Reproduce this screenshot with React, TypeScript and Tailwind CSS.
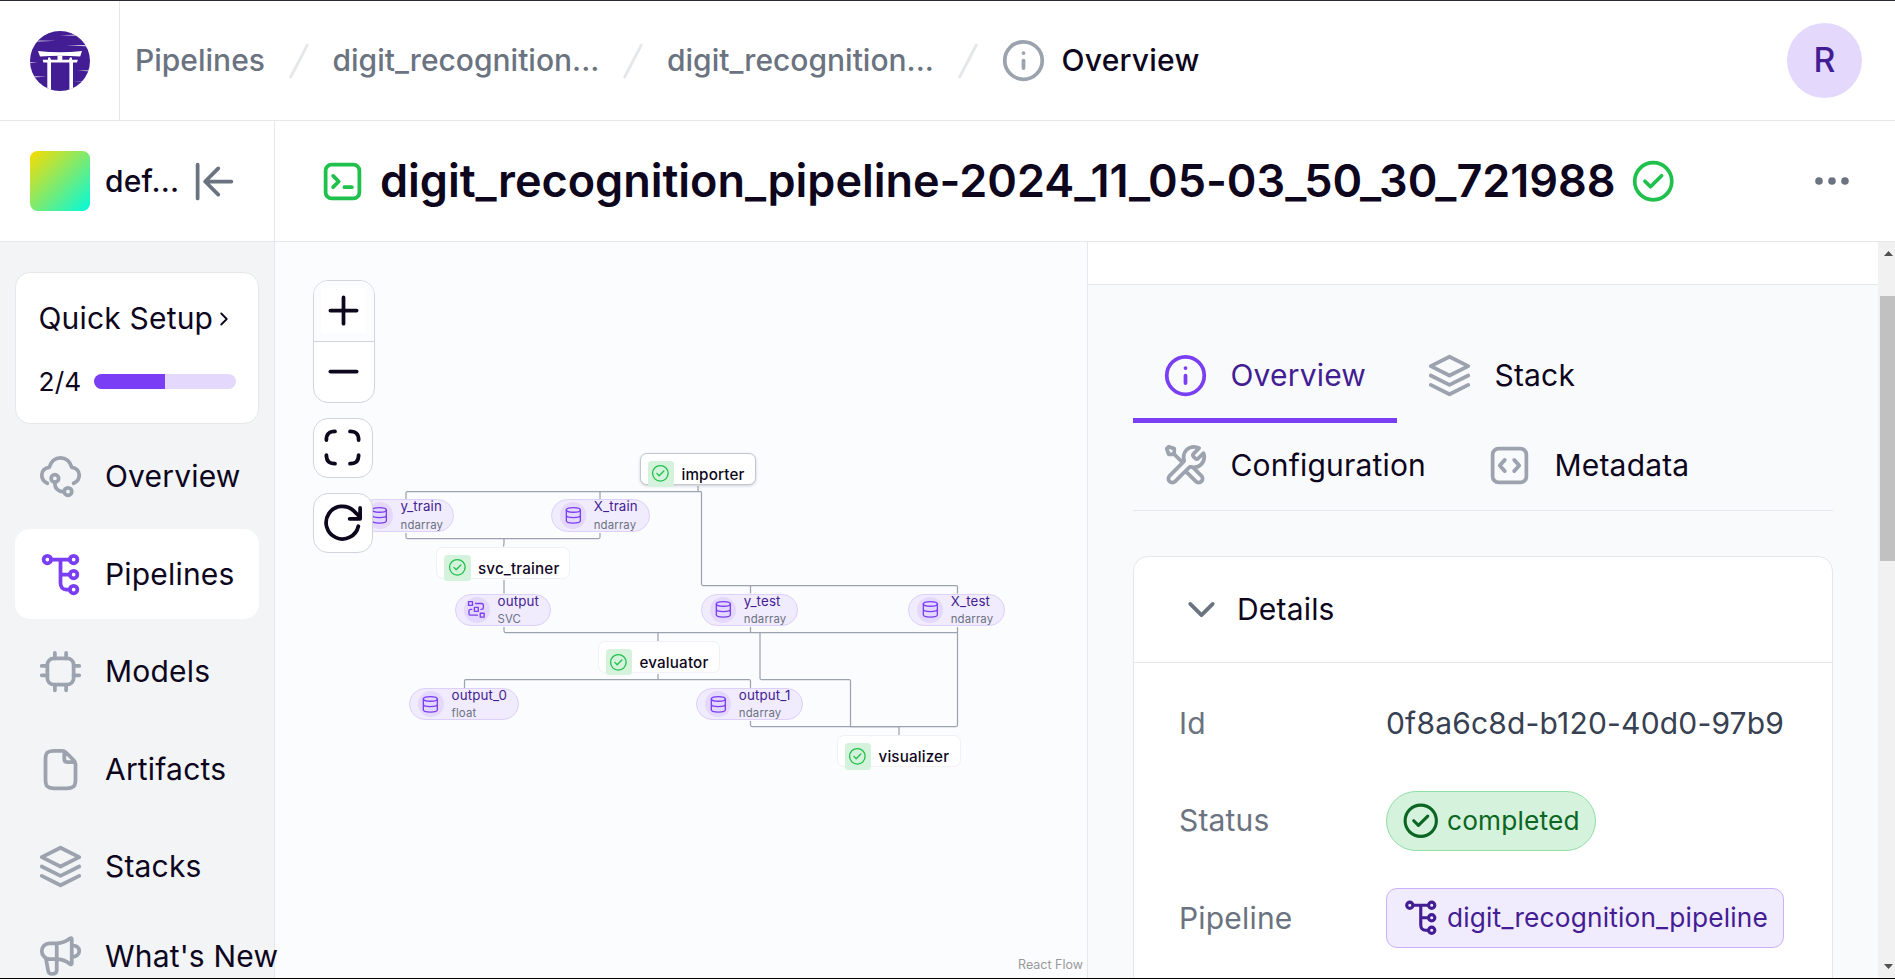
import React from "react";

type IconProps = { className?: string; width?: number };

function Svg({ className = "", width = 2, children }: IconProps & { children: React.ReactNode }) {
  return (
    <svg
      viewBox="0 0 24 24"
      fill="none"
      stroke="currentColor"
      strokeWidth={width}
      strokeLinecap="round"
      strokeLinejoin="round"
      className={`shrink-0 ${className}`}
    >
      {children}
    </svg>
  );
}

const InfoIcon = (p: IconProps) => (
  <Svg {...p}>
    <circle cx="12" cy="12" r="10" />
    <path d="M12 16V12M12 8H12.01" />
  </Svg>
);
const CheckIcon = (p: IconProps) => (
  <Svg {...p}>
    <circle cx="12" cy="12" r="10" />
    <path d="M7.5 12L10.5 15L16.5 9" />
  </Svg>
);
const PipelineIcon = (p: IconProps) => (
  <Svg {...p}>
    <circle cx="5" cy="4" r="2" />
    <circle cx="19" cy="4" r="2" />
    <circle cx="19" cy="12" r="2" />
    <circle cx="19" cy="20" r="2" />
    <path d="M7 4H17M12 4V16.5C12 18.6 13.2 20 15 20H17M12 12H17" />
  </Svg>
);
const CloudIcon = (p: IconProps) => (
  <Svg {...p}>
    <path d="M5 15.6C3.2 14.8 2 13.1 2 11.2C2 9.1 3.7 7.3 6 7.1C6.8 4.1 9.1 2 12 2S17.2 4.1 18 7.1C20.3 7.3 22 9.1 22 11.2C22 13.1 20.8 14.8 19 15.6" />
    <circle cx="9" cy="13" r="2" />
    <circle cx="16" cy="20" r="2" />
    <path d="M9 15V16C9 18.2 10.8 20 13 20H14" />
  </Svg>
);
const CpuIcon = (p: IconProps) => (
  <Svg {...p}>
    <rect x="5" y="5" width="14" height="14" rx="3.4" />
    <path d="M9 2V5M15 2V5M9 19V22M15 19V22M2 9H5M2 14H5M19 9H22M19 14H22" />
  </Svg>
);
const FileIcon = (p: IconProps) => (
  <Svg {...p}>
    <path d="M14 2.3V6.4C14 7.4 14.6 8 15.6 8H19.7M20 9V17.2C20 20.8 19.2 22 15.2 22H8.8C4.8 22 4 20.8 4 17.2V6.8C4 3.2 4.8 2 8.8 2H13C13.8 2 14.3 2.3 14.8 2.8L19.2 7.2C19.7 7.7 20 8.2 20 9Z" />
  </Svg>
);
const LayersIcon = (p: IconProps) => (
  <Svg {...p}>
    <path d="M12 2L22 7L12 12L2 7L12 2ZM2 12L12 17L22 12M2 17L12 22L22 17" />
  </Svg>
);
const MegaphoneIcon = (p: IconProps) => (
  <Svg {...p}>
    <path d="M10 5H6.2C3.8 5 2 6.8 2 9S3.8 13.4 6.2 13.4H10M10 5V13.4M10 5C12.8 5 15.8 3.4 17.2 2.3C17.6 2 18 2.2 18 2.7V15.7C18 16.2 17.6 16.4 17.2 16.1C15.8 15 12.8 13.4 10 13.4M18 6C20.4 6 22 7.2 22 9.1S20.4 12.3 18 12.3M4.2 13L5.4 19.6C5.6 20.6 6.1 21.2 7 21.2H8C9.2 21.2 10 20.4 10 19.2V13.4" />
  </Svg>
);
const CollapseIcon = (p: IconProps) => (
  <Svg {...p}>
    <path d="M3 21V3M21 12H7M7 12L14 19M7 12L14 5" />
  </Svg>
);
const TerminalIcon = (p: IconProps) => (
  <Svg {...p}>
    <rect x="3" y="3" width="18" height="18" rx="3.2" />
    <path d="M7 9L10 12L7 15M13 15H17" />
  </Svg>
);
const CodeIcon = (p: IconProps) => (
  <Svg {...p}>
    <rect x="3" y="3" width="18" height="18" rx="3.2" />
    <path d="M14.5 15L17.2 12L14.5 9M9.5 9L6.8 12L9.5 15" />
  </Svg>
);
const ToolsIcon = (p: IconProps) => (
  <Svg {...p}>
    <path d="M6 6L10.5 10.5M6 6H3L2 3L3 2L6 3V6ZM19.259 2.741L16.631 5.369C16.235 5.765 16.037 5.963 15.963 6.191C15.898 6.392 15.898 6.608 15.963 6.809C16.037 7.037 16.235 7.235 16.631 7.631L16.869 7.869C17.265 8.265 17.463 8.463 17.691 8.537C17.892 8.602 18.108 8.602 18.309 8.537C18.537 8.463 18.735 8.265 19.131 7.869L21.589 5.411C21.854 6.055 22 6.76 22 7.5C22 10.538 19.538 13 16.5 13C16.134 13 15.776 12.964 15.43 12.896C14.944 12.8 14.7 12.752 14.553 12.767C14.397 12.782 14.319 12.806 14.181 12.88C14.05 12.95 13.919 13.081 13.657 13.343L6.5 20.5C5.672 21.328 4.328 21.328 3.5 20.5C2.672 19.672 2.672 18.328 3.5 17.5L10.657 10.343C10.919 10.081 11.05 9.95 11.12 9.819C11.194 9.681 11.218 9.603 11.233 9.447C11.248 9.299 11.2 9.056 11.104 8.57C11.036 8.224 11 7.866 11 7.5C11 4.462 13.462 2 16.5 2C17.506 2 18.448 2.27 19.259 2.741ZM12 15L17.5 20.5C18.328 21.328 19.672 21.328 20.5 20.5C21.328 19.672 21.328 18.328 20.5 17.5L15.975 12.975C15.655 12.945 15.343 12.887 15.041 12.804C14.652 12.698 14.225 12.775 13.94 13.06L12 15Z" />
  </Svg>
);
const DatabaseIcon = (p: IconProps) => (
  <Svg {...p}>
    <ellipse cx="12" cy="5" rx="9" ry="3" />
    <path d="M3 5V19C3 20.7 7 22 12 22S21 20.7 21 19V5M3 12C3 13.7 7 15 12 15S21 13.7 21 12" />
  </Svg>
);
const DataflowIcon = (p: IconProps) => (
  <Svg {...p}>
    <rect x="2" y="2" width="5" height="5" />
    <rect x="9.5" y="9.5" width="5" height="5" />
    <rect x="17" y="17" width="5" height="5" />
    <path d="M11 4.5H18.5C20 4.5 21 5.3 21 6.5V10C21 11.3 20 12 18.5 12H17.8M6.2 12H5C3.7 12 2.5 12.8 2.5 14V17.5C2.5 18.8 3.7 19.5 5 19.5H13.5" />
  </Svg>
);

function Logo() {
  return (
    <svg viewBox="0 0 60 60" className="size-[60px]">
      <defs>
        <clipPath id="disc">
          <circle cx="30" cy="30" r="30" />
        </clipPath>
      </defs>
      <g clipPath="url(#disc)">
        <rect width="60" height="60" fill="#431d93" />
        <g fill="#fff">
          <path d="M8 20Q30 22.6 52 20L50.2 25.4Q30 24 10 25.4Z" />
          <path d="M12.7 28.7H18V26.7L20 26.2L21 28.7H27.5V24.5H32.3V28.7H39L40 26.2L42 26.7V28.7H47.8L47 31.6H13.4Z" />
          <path d="M17.3 31H21V60H17.3ZM39.4 31H43V60H39.4Z" />
          <path d="M36 14.2L60 14.2V15.6Z" />
          <path d="M0 31.2L7.6 31.7L0 32.1Z" />
          <path d="M0 45.2L16.5 45.8L0 46.4Z" />
          <path opacity=".6" d="M4 9.2L26 9.8L4 10.9Z" />
          <path opacity=".55" d="M30 4.4L52 3L52 5.2Z" />
          <path opacity=".6" d="M47.5 39.6L60 39V40.4Z" />
          <path opacity=".5" d="M43 50.4L58 49.8V51Z" />
        </g>
      </g>
    </svg>
  );
}

const Slash = () => (
  <svg viewBox="0 0 20 36" className="h-9 w-5 shrink-0" fill="none" stroke="#e5e7eb" strokeWidth="2.8" strokeLinecap="round">
    <path d="M18.3 2L1.7 34" />
  </svg>
);

const navItems = [
  { label: "Overview", Icon: CloudIcon },
  { label: "Pipelines", Icon: PipelineIcon, active: true },
  { label: "Models", Icon: CpuIcon },
  { label: "Artifacts", Icon: FileIcon },
  { label: "Stacks", Icon: LayersIcon },
];

type Step = { name: string; x: number; y: number; w: number; selected?: boolean };
const steps: Step[] = [
  { name: "importer", x: 639.5, y: 452.5, w: 116.5, selected: true },
  { name: "svc_trainer", x: 436, y: 546.5, w: 134 },
  { name: "evaluator", x: 597.5, y: 640.7, w: 122 },
  { name: "visualizer", x: 836.5, y: 735, w: 124 },
];

type Artifact = { name: string; type: string; x: number; y: number; w: number; model?: boolean };
const artifacts: Artifact[] = [
  { name: "y_train", type: "ndarray", x: 358, y: 499.3, w: 96 },
  { name: "X_train", type: "ndarray", x: 551.2, y: 499.3, w: 98.5 },
  { name: "output", type: "SVC", x: 455, y: 593.5, w: 96.3, model: true },
  { name: "y_test", type: "ndarray", x: 701.3, y: 593.5, w: 96.3 },
  { name: "X_test", type: "ndarray", x: 908.2, y: 593.5, w: 96.5 },
  { name: "output_0", type: "float", x: 409, y: 687.6, w: 110 },
  { name: "output_1", type: "ndarray", x: 696.3, y: 687.6, w: 106.5 },
];

const edges = [
  "M698 486V491.7M406 499V493.2Q406 491.7 407.5 491.7H701.5M600 499V491.7",
  "M701.5 491.7V584Q701.5 585.5 703 585.5H956Q957.5 585.5 957.5 587V593.5M750.5 593.5V585.5",
  "M406 533V537Q406 538.5 407.5 538.5H598.5Q600 538.5 600 537V533M504 538.5V543L503.5 546.5",
  "M504 580V593.5",
  "M504 627V631Q504 632.5 505.5 632.5H957.5M750.5 627V632.5M658 632.5V641",
  "M957.5 627V725Q957.5 726.5 956 726.5H752Q750.5 726.5 750.5 725V721",
  "M760 632.5V678Q760 679.5 761.5 679.5H849Q850.5 679.5 850.5 681V726.5",
  "M658 674V679.5M464.5 688V681Q464.5 679.5 466 679.5H749Q750.5 679.5 750.5 681V688",
  "M850.5 726.5H899V735",
];

const CANVAS_X = 275;
const CANVAS_Y = 242;

function StepNode({ step }: { step: Step }) {
  return (
    <div
      className={`absolute flex h-8 items-start rounded-[7px] border bg-white pt-[7px] pl-[7px] ${
        step.selected ? "border-[#c3c7ce] shadow-[0_1px_3px_rgba(16,24,40,0.2)]" : "border-[#f0f1f4]"
      }`}
      style={{ left: step.x - CANVAS_X, top: step.y - CANVAS_Y, width: step.w }}
    >
      <div className="flex size-[26.5px] shrink-0 items-center justify-center rounded-[3.5px] bg-[#d5f2dc]">
        <CheckIcon className="size-[18.7px] text-[#1fc04b]" width={1.7} />
      </div>
      <span className="ml-[7.5px] text-[15.2px] leading-[27px] font-medium tracking-[0.01em] text-[#0d061d]">{step.name}</span>
    </div>
  );
}

function ArtifactNode({ node }: { node: Artifact }) {
  const Icon = node.model ? DataflowIcon : DatabaseIcon;
  return (
    <div
      className="absolute flex h-[32.5px] items-center rounded-full border border-[#ddd0fb] bg-[#f1ebfe] pl-[7.5px]"
      style={{ left: node.x - CANVAS_X, top: node.y - CANVAS_Y, width: node.w }}
    >
      <div className="flex size-[26.5px] shrink-0 items-center justify-center rounded-full bg-[#e4d8fd]">
        <Icon className="size-[18.7px] text-[#7a3ef4]" width={1.7} />
      </div>
      <div className="mt-px ml-[7.5px] flex flex-col tracking-[0.01em]">
        <span className="text-[13.3px] leading-[17.5px] text-[#431d93]">{node.name}</span>
        <span className="text-[11.4px] leading-[18px] text-[#6b7280]">{node.type}</span>
      </div>
    </div>
  );
}

function Canvas() {
  return (
    <div className="relative min-w-0 flex-1 overflow-hidden bg-[#fbfcfe]">
      <svg viewBox="275 242 812 736" className="absolute top-0 left-0 h-[736px] w-[812px]" fill="none" stroke="#9ca3af" strokeWidth="1.25">
        {edges.map((d) => (
          <path key={d} d={d} />
        ))}
      </svg>
      {artifacts.map((a) => (
        <ArtifactNode key={a.name} node={a} />
      ))}
      {steps.map((s) => (
        <StepNode key={s.name} step={s} />
      ))}
      <div className="absolute top-[38px] left-[38px] flex flex-col items-start gap-[15px] text-[#0d061d]">
        <div className="flex h-[123px] w-[62px] flex-col overflow-hidden rounded-[15px] border border-[#d0d5dc] bg-white">
          <div className="flex h-[61px] shrink-0 border-b border-[#d0d5dc] bg-[#fbfcfe] pt-[7px] pl-[7px]">
            <Svg className="size-[45px] bg-white">
              <path d="M12 5V19M5 12H19" />
            </Svg>
          </div>
          <div className="flex flex-1 pt-[7px] pl-[7px]">
            <Svg className="size-[45px]">
              <path d="M5 12H19" />
            </Svg>
          </div>
        </div>
        <div className="flex size-[60px] rounded-[15px] border border-[#d0d5dc] bg-white pt-[6px] pl-[6px]">
          <Svg className="size-[45px]">
            <path d="M8 3.4C5.2 3.4 3.4 4.4 3.4 8M16 3.4C18.8 3.4 20.6 4.4 20.6 8M20.6 16C20.6 19.6 18.8 20.6 16 20.6M8 20.6C5.2 20.6 3.4 19.6 3.4 16" />
          </Svg>
        </div>
        <div className="flex size-[60px] rounded-[15px] border border-[#d0d5dc] bg-white pt-[6px] pl-[6px]">
          <Svg className="size-[45px]">
            <path d="M20.45 14A8.7 8.7 0 1 1 18 5.8L21.4 9.2M21.4 4.2V10H15.8" />
          </Svg>
        </div>
      </div>
      <span className="absolute right-[4px] bottom-[5px] text-[12.5px] leading-4 text-[#999999]">React Flow</span>
    </div>
  );
}

function Tab({ label, icon, className }: { label: string; icon: React.ReactNode; className: string }) {
  return (
    <div className={`flex h-[90px] items-center gap-[22.5px] pl-[30px] text-[30px] ${className}`}>
      {icon}
      <span>{label}</span>
    </div>
  );
}

function SidePanel() {
  return (
    <div className="flex w-[808px] shrink-0 border-l border-[#e5e7eb] tracking-[0.0115em]">
      <div className="flex min-w-0 flex-1 flex-col overflow-hidden bg-[#f9fafc]">
        <div className="h-[43px] shrink-0 border-b border-[#e5e7eb] bg-white" />
        <div className="flex flex-col pt-[45px] pr-[45px] pl-[45px]">
          <div className="flex flex-col border-b border-[#e5e7eb]">
            <div className="flex">
              <Tab
                label="Overview"
                className="relative w-[264px] text-[#431d93] after:absolute after:inset-x-0 after:-bottom-[3px] after:h-[5.5px] after:bg-[#7a3ef4]"
                icon={<InfoIcon className="size-[45px] text-[#7a3ef4]" />}
              />
              <Tab label="Stack" className="text-[#0d061d]" icon={<LayersIcon className="size-[45px] text-[#9ca3af]" />} />
            </div>
            <div className="flex">
              <Tab label="Configuration" className="w-[324px] text-[#0d061d]" icon={<ToolsIcon className="size-[45px] text-[#9ca3af]" />} />
              <Tab label="Metadata" className="text-[#0d061d]" icon={<CodeIcon className="size-[45px] text-[#9ca3af]" />} />
            </div>
          </div>
          <div className="mt-[45px] flex h-[600px] shrink-0 flex-col rounded-[15px] border border-[#e5e7eb] bg-white">
            <div className="flex h-[106px] shrink-0 items-center border-b border-[#e5e7eb] pl-[45px]">
              <Svg className="size-[45px] text-[#6b7280]">
                <path d="M6 9L12 15L18 9" />
              </Svg>
              <span className="ml-[13px] text-[30px] text-[#0d061d]">Details</span>
            </div>
            <div className="grid auto-rows-[97.5px] grid-cols-[207px_1fr] items-center pt-[12px] pl-[45px] text-[30px] text-[#6b7280]">
              <span>Id</span>
              <span className="whitespace-nowrap text-[#374151]">0f8a6c8d-b120-40d0-97b9</span>
              <span className="mb-px">Status</span>
              <span className="mb-px flex h-[60px] w-[210px] items-center gap-[7.5px] rounded-full border border-[#8fdfa5] bg-[#d5f2dc] pl-[15px] text-[26.25px] text-[#0b6623]">
                <CheckIcon className="size-[37.5px]" />
                completed
              </span>
              <span>Pipeline</span>
              <span className="mb-[2px] flex h-[60px] w-[398px] items-center gap-[7.5px] rounded-[11px] border border-[#c9b2fa] bg-[#f1ebfe] pl-[15px] text-[26.25px] text-[#431d93]">
                <PipelineIcon className="size-[37.5px]" />
                digit_recognition_pipeline
              </span>
            </div>
          </div>
        </div>
      </div>
      <div className="flex w-[17px] shrink-0 flex-col items-center bg-[#f1f1f1]">
        <svg viewBox="0 0 17 17" className="mt-1 size-[17px]" fill="#505050">
          <path d="M10.5 5L15 10H6Z" />
        </svg>
        <div className="mt-[33px] ml-[2px] h-[265px] w-[15px] bg-[#c1c1c1]" />
        <svg viewBox="0 0 17 17" className="mt-auto size-[17px]" fill="#505050">
          <path d="M6 3H15L10.5 8Z" />
        </svg>
      </div>
    </div>
  );
}

function Sidebar() {
  return (
    <aside className="flex w-[275px] shrink-0 flex-col border-r border-[#e5e7eb] bg-[#f2f4f6] tracking-[0.0115em]">
      <div className="flex h-[121px] shrink-0 items-center border-b border-[#e5e7eb] bg-white pl-[30px]">
        <div className="size-[60px] rounded-[7.5px] bg-linear-to-br/srgb from-[#fbdb00] to-[#00fade]" />
        <span className="ml-[15px] w-[87px] text-[30px] font-medium text-[#0d061d]">def...</span>
        <CollapseIcon className="size-[45px] text-[#6b7280]" />
      </div>
      <div className="relative z-10 flex min-h-0 flex-1 flex-col px-[15px] pt-[30px]">
        <div className="flex h-[152px] shrink-0 flex-col rounded-[15px] border border-[#e5e7eb] bg-white px-[22px] pt-[23px]">
          <div className="flex h-[45px] items-center text-[30px] text-[#0d061d]">
            <span className="ml-[0.5px] whitespace-nowrap">Quick Setup</span>
            <Svg className="size-[22px]">
              <path d="M9 18L15 12L9 6" />
            </Svg>
          </div>
          <div className="mt-[22px] flex h-[37px] items-center">
            <span className="w-[56px] pl-[0.5px] text-[26.25px] text-[#0d061d]">2/4</span>
            <div className="h-[15px] w-[142px] shrink-0 overflow-hidden rounded-full bg-[#e4d8fd]">
              <div className="h-full w-1/2 bg-[#7a3ef4]" />
            </div>
          </div>
        </div>
        <nav className="mt-[7.5px] flex flex-col gap-[7.5px]">
          {navItems.map(({ label, Icon, active }) => (
            <div
              key={label}
              className={`flex h-[90px] shrink-0 items-center gap-[22.5px] rounded-[15px] pl-[22.5px] text-[30px] text-[#0d061d] ${
                active ? "bg-white" : ""
              }`}
            >
              <Icon className={`size-[45px] ${active ? "text-[#7a3ef4]" : "text-[#9ca3af]"}`} />
              <span>{label}</span>
            </div>
          ))}
        </nav>
        <div className="flex h-[90px] shrink-0 items-center gap-[22.5px] pl-[22.5px] text-[30px] whitespace-nowrap text-[#0d061d]">
          <MegaphoneIcon className="size-[45px] text-[#9ca3af]" />
          <span>What's New</span>
        </div>
      </div>
    </aside>
  );
}

export default function App() {
  return (
    <div className="flex h-[979px] w-[1895px] flex-col overflow-hidden border-t border-b border-t-[#2b2a33] border-b-black bg-white font-['Inter',sans-serif]">
      <header className="flex h-[120px] shrink-0 items-center border-b border-[#e5e7eb] text-[30px]">
        <div className="flex h-full w-[120px] shrink-0 items-center justify-center border-r border-[#e5e7eb]">
          <Logo />
        </div>
        <div className="flex items-center pl-[15px] font-medium text-[#6b7280]">
          <span className="w-[154px]">Pipelines</span>
          <Slash />
          <span className="ml-[23.5px] w-[290.5px]">digit_recognition...</span>
          <Slash />
          <span className="ml-[24px] w-[291px]">digit_recognition...</span>
          <Slash />
          <InfoIcon className="ml-[22.5px] size-[45px] text-[#9ca3af]" />
          <span className="ml-[16px] tracking-[0.008em] text-[#0d061d]">Overview</span>
        </div>
        <div className="mr-[33px] ml-auto flex size-[75px] items-center justify-center rounded-full bg-[#e4d8fd] text-[33.75px] font-medium text-[#431d93]">
          R
        </div>
      </header>
      <div className="flex min-h-0 flex-1">
        <Sidebar />
        <div className="flex min-w-0 flex-1 flex-col">
          <div className="flex h-[121px] shrink-0 items-center border-b border-[#e5e7eb] bg-white pl-[45px]">
            <TerminalIcon className="size-[45px] text-[#1fc04b]" />
            <h1 className="ml-[15px] w-[1251px] text-[45px] font-semibold tracking-[-0.03px] whitespace-nowrap text-[#0d061d]">
              digit_recognition_pipeline-2024_11_05-03_50_30_721988
            </h1>
            <CheckIcon className="size-[44.5px] text-[#1fc04b]" />
            <svg viewBox="0 0 36 10" className="mr-[45px] ml-auto h-[10px] w-9" fill="#6b7280">
              <circle cx="5" cy="5" r="3.8" />
              <circle cx="18" cy="5" r="3.8" />
              <circle cx="31" cy="5" r="3.8" />
            </svg>
          </div>
          <div className="flex min-h-0 flex-1">
            <Canvas />
            <SidePanel />
          </div>
        </div>
      </div>
    </div>
  );
}
